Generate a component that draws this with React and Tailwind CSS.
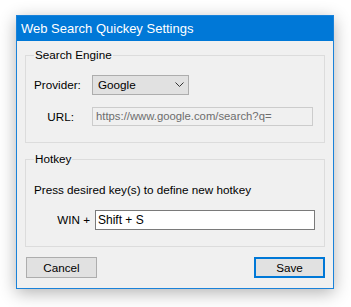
import React, { useState } from "react";

const uiFont = { fontFamily: '"Liberation Sans", Arial, sans-serif' };

function Chevron() {
  return (
    <svg width="9" height="6" viewBox="0 0 9 6" className="block">
      <path d="M0.5 0.5 L4.5 4.5 L8.5 0.5" fill="none" stroke="#333" strokeWidth="1" />
    </svg>
  );
}

export default function App() {
  const [hotkey, setHotkey] = useState("Shift + S");

  return (
    <div
      className="w-[351px] h-[307px] bg-white pt-[15px] pl-[16px] text-[11.7px] text-black"
      style={uiFont}
    >
      {/* ===== Window ===== */}
      <div className="w-[318px] h-[274px] border border-[#1a82d9] bg-[#f0f0f0] shadow-[0_4px_16px_rgba(0,0,0,0.3)] flex flex-col">
        <div className="h-[25px] bg-[#0078d7] text-white text-[13px] leading-[25px] pl-[4px]">
          Web Search Quickey Settings
        </div>

        <div className="flex-1 px-[8px] pt-[6px] flex flex-col">
          {/* Search Engine */}
          <fieldset className="border border-[#dcdcdc] h-[96px] px-[8px]">
            <legend className="px-[1px] leading-[16px]">Search Engine</legend>
            <div className="flex items-center mt-[12px]">
              <span className="w-[58px] leading-[20px]">Provider:</span>
              <div className="w-[97px] h-[20px] bg-[#e1e1e1] border border-[#adadad] flex items-center justify-between pl-[5px] pr-[4px]">
                <span className="leading-[18px]">Google</span>
                <Chevron />
              </div>
            </div>
            <div className="flex items-center mt-[12px]">
              <span className="w-[58px] text-right pr-[18px] leading-[19px]">URL:</span>
              <div className="w-[221px] h-[19px] bg-[#f0f0f0] border border-[#cccccc] pl-[3px] text-[#6d6d6d] text-[11.3px] leading-[17px] overflow-hidden whitespace-nowrap">
                https://www.google.com/search?q=
              </div>
            </div>
          </fieldset>

          {/* Hotkey */}
          <fieldset className="border border-[#dcdcdc] h-[96px] px-[8px] mt-[8px]">
            <legend className="px-[1px] leading-[16px]">Hotkey</legend>
            <div className="mt-[15px] leading-[16px]">Press desired key(s) to define new hotkey</div>
            <div className="flex items-center mt-[12px]">
              <span className="w-[61px] text-right pr-[5px] leading-[20px]">WIN +</span>
              <input
                value={hotkey}
                onChange={(e) => setHotkey(e.target.value)}
                className="w-[220px] h-[20px] bg-white border border-[#7a7a7a] pl-[2px] outline-none text-[12px]"
                style={uiFont}
              />
            </div>
          </fieldset>

          <div className="flex justify-between mt-[10px] pl-[1px]">
            <button className="w-[71px] h-[21px] bg-[#e1e1e1] border border-[#adadad] leading-[19px]">
              Cancel
            </button>
            <button className="w-[71px] h-[21px] bg-[#e1e1e1] border-2 border-[#0078d7] leading-[17px]">
              Save
            </button>
          </div>
        </div>
      </div>
    </div>
  );
}
